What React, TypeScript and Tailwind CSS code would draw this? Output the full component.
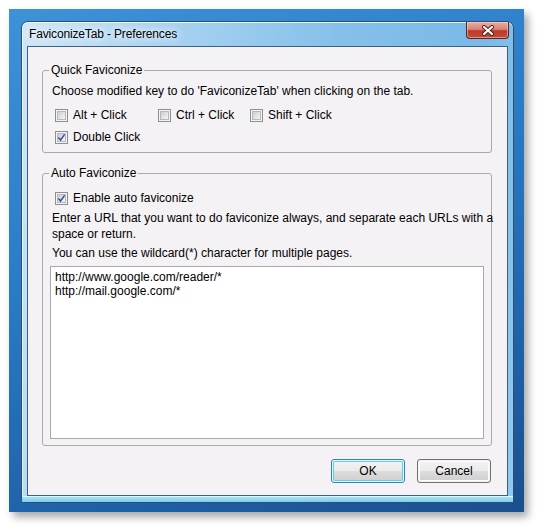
import React from "react";

function Check({ checked, label }: { checked?: boolean; label: string }) {
  return (
    <div className="flex items-center h-[16px]">
      <span className="w-[13px] h-[13px] border border-[#8e8f8f] bg-[#f4f4f4] p-[1px] flex shrink-0">
        <span className="flex-1 relative bg-gradient-to-br from-[#cdcdcd] to-[#f6f6f6] border border-[#b5b8bd]">
          {checked && (
            <svg viewBox="0 0 7 7" className="absolute left-[0px] top-[0px] w-[7px] h-[7px] overflow-visible">
              <path d="M0.4 3.4 L2.6 6 L6.6 0.4" fill="none" stroke="#3a50a0" strokeWidth="1.5" />
            </svg>
          )}
        </span>
      </span>
      <span className="ml-[5px] whitespace-nowrap">{label}</span>
    </div>
  );
}

function Button({ label, focused }: { label: string; focused?: boolean }) {
  return (
    <button
      className={
        "w-[74px] h-[24px] rounded-[3px] border flex flex-col overflow-hidden p-[1px] " +
        (focused ? "border-[#3c7fb1]" : "border-[#707070]")
      }
    >
      <span
        className={
          "flex-1 w-full rounded-[2px] relative flex items-center justify-center bg-[linear-gradient(to_bottom,#f3f3f3_0%,#ebebeb_48%,#dddddd_52%,#cfcfcf_100%)] " +
          (focused ? "shadow-[inset_0_0_0_1px_#48d8fb]" : "shadow-[inset_0_0_0_1px_#fbfbfb]")
        }
      >
        <span className="text-black">{label}</span>
      </span>
    </button>
  );
}

export default function App() {
  return (
    <div className="w-[538px] h-[527px] bg-white p-[9px] font-['Liberation_Sans',Arial,sans-serif] text-[12px] leading-[16px] text-black">
      <div className="w-[515px] h-[503px] pt-[12px] pl-[12px] shadow-[4px_5px_8px_rgba(0,0,0,0.35)] bg-[linear-gradient(160deg,#3d92d8_0%,#2a7cc6_40%,#1f62aa_75%,#1b4f8e_100%)]">
        <div className="relative w-[493px] h-[482px] rounded-t-[7px] rounded-b-[3px] border border-[#2e4f72] bg-[linear-gradient(100deg,#cfe7f8_0%,#a9d3f1_25%,#86c0ea_55%,#7ab9e8_80%,#92c9ee_100%)] shadow-[inset_0_1px_0_rgba(255,255,255,0.8),inset_1px_0_0_rgba(255,255,255,0.6)] flex flex-col">
          <div className="h-[24px] pl-[7px] flex items-center text-[12px] tracking-[-0.15px] [text-shadow:0_0_6px_#fff,0_0_10px_#fff]">
            FaviconizeTab - Preferences
          </div>
          <div className="absolute top-0 right-[4px] w-[43px] h-[17px] rounded-b-[4px] border border-t-0 border-[#5b2520] bg-[linear-gradient(to_bottom,#e9aca2_0%,#d98579_45%,#bb3a2b_55%,#c74a34_100%)] shadow-[inset_0_0_0_1px_rgba(255,220,210,0.5)] flex items-center justify-center">
            <svg width="14" height="11" viewBox="0 0 14 11">
              <path d="M3 2 L11 9 M11 2 L3 9" stroke="#4a1a15" strokeWidth="4" strokeLinecap="round" />
              <path d="M3 2 L11 9 M11 2 L3 9" stroke="#ffffff" strokeWidth="2.2" strokeLinecap="round" />
            </svg>
          </div>
          <div className="ml-[5px] w-[481px] h-[450px] border border-[#3d5f80] bg-[#f5f2f5] flex flex-col pt-[15px] pl-[14px]">
            <fieldset className="w-[450px] border border-[#a9a9a9] rounded-[3px] p-0 m-0">
              <legend className="ml-[6px] px-[2px]">Quick Faviconize</legend>
              <div className="px-[7px] pb-[7px] flex flex-col">
                <div className="mt-[5px] ml-[2px]">Choose modified key to do 'FaviconizeTab' when clicking on the tab.</div>
                <div className="mt-[8px] ml-[5px] flex">
                  <div className="w-[103px]"><Check label="Alt + Click" /></div>
                  <div className="w-[92px]"><Check label="Ctrl + Click" /></div>
                  <div><Check label="Shift + Click" /></div>
                </div>
                <div className="mt-[6px] ml-[5px]"><Check checked label="Double Click" /></div>
              </div>
            </fieldset>
            <fieldset className="mt-[12px] w-[450px] border border-[#a9a9a9] rounded-[3px] p-0 m-0">
              <legend className="ml-[6px] px-[2px]">Auto Faviconize</legend>
              <div className="px-[7px] pb-[6px] flex flex-col">
                <div className="mt-[9px] ml-[5px]"><Check checked label="Enable auto faviconize" /></div>
                <div className="mt-[4px] ml-[2px] -mr-[14px]">Enter a URL that you want to do faviconize always, and separate each URLs with a space or return.</div>
                <div className="mt-[3px] ml-[2px]">You can use the wildcard(*) character for multiple pages.</div>
                <div className="mt-[5px] h-[173px] border border-[#a9a9a9] bg-white pl-[4px] pt-[3px] leading-[14px]">
                  <div>http://www.google.com/reader/*</div>
                  <div>http://mail.google.com/*</div>
                </div>
              </div>
            </fieldset>
            <div className="mt-[13px] w-[450px] flex justify-end gap-[12px] pr-[1px]">
              <Button label="OK" focused />
              <Button label="Cancel" />
            </div>
          </div>
          <div className="flex-1 border-t border-[#e4f6fd] bg-[linear-gradient(to_bottom,#a2e2f7,#7fcdf0)]" />
        </div>
      </div>
    </div>
  );
}
